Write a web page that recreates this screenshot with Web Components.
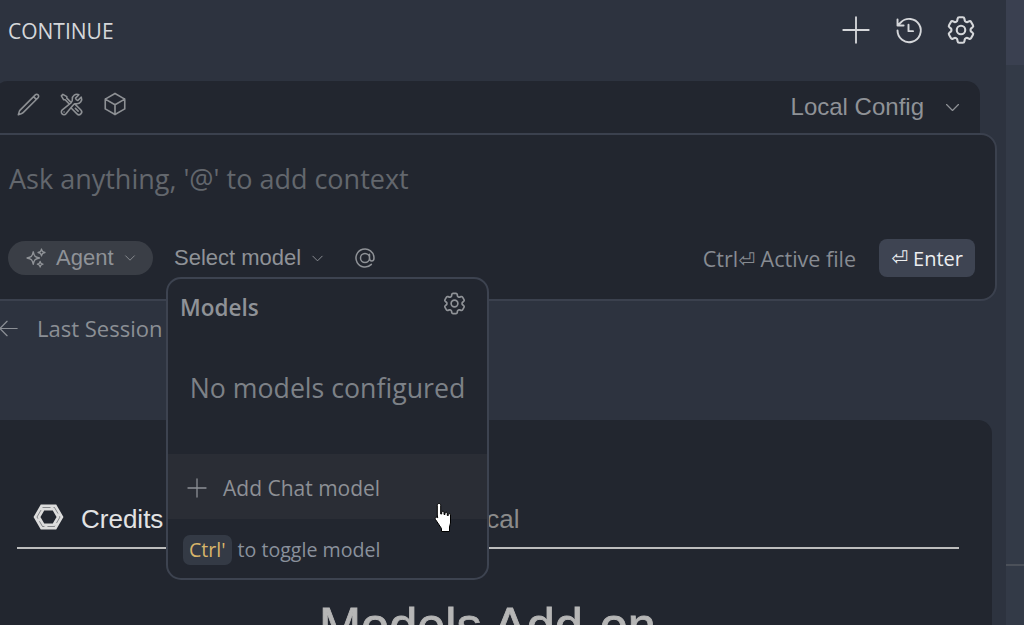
<!DOCTYPE html>
<html lang="en">
<head>
<meta charset="utf-8">
<title>Continue</title>
<style>
  html, body { margin: 0; height: 100%; overflow: hidden; background: #2d333f; }
  body { font-family: "Open Sans", "Liberation Sans", sans-serif; }
</style>
</head>
<body>
<continue-app></continue-app>

<script>
// icon paths, all drawn on a 24x24 box
const ICONS = {
  pencil: "m16.862 4.487 1.687-1.688a1.875 1.875 0 1 1 2.652 2.652L6.832 19.82a4.5 4.5 0 0 1-1.897 1.13l-2.685.8.8-2.685a4.5 4.5 0 0 1 1.13-1.897L16.863 4.487Zm0 0L19.5 7.125",
  tools: "M11.42 15.17 17.25 21A2.652 2.652 0 0 0 21 17.25l-5.877-5.877M11.42 15.17l2.496-3.03c.317-.384.74-.626 1.208-.766M11.42 15.17l-4.655 5.653a2.548 2.548 0 1 1-3.586-3.586l6.837-5.63m5.108-.233c.55-.164 1.163-.188 1.743-.14a4.5 4.5 0 0 0 4.486-6.336l-3.276 3.277a3.004 3.004 0 0 1-2.25-2.25l3.276-3.276a4.5 4.5 0 0 0-6.336 4.486c.091 1.076-.071 2.264-.904 2.95l-.102.085m-1.745 1.437L5.909 7.5H4.5L2.25 3.75l1.5-1.5L7.5 4.5v1.409l4.26 4.26m-1.745 1.437 1.745-1.437m6.615 8.206L15.75 15.75M4.867 19.125h.008v.008h-.008v-.008Z",
  cube: "m21 7.5-9-5.25L3 7.5m18 0-9 5.25m9-5.25v9l-9 5.25M3 7.5l9 5.25M3 7.5v9l9 5.25m0-9v9",
  sparkles: "M9.813 15.904 9 18.75l-.813-2.846a4.5 4.5 0 0 0-3.09-3.09L2.25 12l2.846-.813a4.5 4.5 0 0 0 3.09-3.09L9 5.25l.813 2.846a4.5 4.5 0 0 0 3.09 3.09L15.75 12l-2.846.813a4.5 4.5 0 0 0-3.09 3.09ZM18.259 8.715 18 9.750l-.259-1.035a3.375 3.375 0 0 0-2.455-2.456L14.25 6l1.036-.259a3.375 3.375 0 0 0 2.455-2.456L18 2.25l.259 1.035a3.375 3.375 0 0 0 2.456 2.456L21.75 6l-1.035.259a3.375 3.375 0 0 0-2.456 2.456ZM16.894 20.567 16.5 21.75l-.394-1.183a2.25 2.25 0 0 0-1.423-1.423L13.5 18.75l1.183-.394a2.25 2.25 0 0 0 1.423-1.423l.394-1.183.394 1.183a2.25 2.25 0 0 0 1.423 1.423l1.183.394-1.183.394a2.25 2.25 0 0 0-1.423 1.423Z",
  gear: "M9.594 3.94c.09-.542.56-.94 1.11-.94h2.593c.55 0 1.02.398 1.11.94l.213 1.281c.063.374.313.686.645.87.074.04.147.083.22.127.325.196.72.257 1.075.124l1.217-.456a1.125 1.125 0 0 1 1.37.49l1.296 2.247a1.125 1.125 0 0 1-.26 1.431l-1.003.827c-.293.241-.438.613-.43.992a7.723 7.723 0 0 1 0 .255c-.008.378.137.75.43.991l1.004.827c.424.35.534.955.26 1.43l-1.298 2.247a1.125 1.125 0 0 1-1.369.491l-1.217-.456c-.355-.133-.75-.072-1.076.124a6.47 6.47 0 0 1-.22.128c-.331.183-.581.495-.644.869l-.213 1.281c-.09.543-.56.94-1.11.94h-2.594c-.55 0-1.019-.398-1.11-.94l-.213-1.281c-.062-.374-.312-.686-.644-.87a6.52 6.52 0 0 1-.22-.127c-.325-.196-.72-.257-1.076-.124l-1.217.456a1.125 1.125 0 0 1-1.369-.49l-1.297-2.247a1.125 1.125 0 0 1 .26-1.431l1.004-.827c.292-.24.437-.613.43-.991a6.932 6.932 0 0 1 0-.255c.007-.38-.138-.751-.43-.992l-1.004-.827a1.125 1.125 0 0 1-.26-1.43l1.297-2.247a1.125 1.125 0 0 1 1.37-.491l1.216.456c.356.133.751.072 1.076-.124.072-.044.146-.086.22-.128.332-.183.582-.495.644-.869l.214-1.28ZM15 12a3 3 0 1 1-6 0 3 3 0 0 1 6 0Z",
  at: "M16.5 12a4.5 4.5 0 1 1-9 0 4.5 4.5 0 0 1 9 0Zm0 0c0 1.657 1.007 3 2.25 3S21 13.657 21 12a9 9 0 1 0-2.636 6.364M16.5 12V8.25",
  plus: "M12 3v18M3 12h18",
  history: "M3.500 12a9 9 0 1 0 2.500-6.200L3.500 8.200M3.500 3.500v4.700h4.700M12 7.500v5h3.500",
  chevron: "m19.5 8.25-7.5 7.5-7.5-7.5",
  back: "M10.5 19.5 3 12l7.5-7.5M3 12h18"
};

class UiIcon extends HTMLElement {
  connectedCallback() {
    if (this.shadowRoot) return;
    const size = this.getAttribute("size") || 24;
    const stroke = this.getAttribute("stroke") || 1.5;
    const shadow = this.attachShadow({ mode: "open" });
    shadow.innerHTML = `
      <style>
        :host { display: inline-flex; flex: none; width: ${size}px; height: ${size}px; color: inherit; }
        svg { width: 100%; height: 100%; display: block; }
      </style>
      <svg viewBox="0 0 24 24" fill="none" stroke="currentColor" stroke-width="${stroke}"
           stroke-linecap="round" stroke-linejoin="round"><path d="${ICONS[this.getAttribute("name")]}"/></svg>`;
  }
}
customElements.define("ui-icon", UiIcon);

// Title row with the three actions on the right
class TopBar extends HTMLElement {
  constructor() {
    super();
    this.attachShadow({ mode: "open" }).innerHTML = `
      <style>
        :host { display: flex; align-items: center; height: 62px; padding: 0 28px 0 8px; color: #d5d7da; }
        .title { flex: 1; font-size: 21px; }
        .actions { display: flex; align-items: center; gap: 20px; padding-bottom: 2px; }
      </style>
      <span class="title"><slot></slot></span>
      <div class="actions">
        <ui-icon name="plus" size="34" stroke="1.3"></ui-icon>
        <ui-icon name="history" size="31" stroke="1.5"></ui-icon>
        <ui-icon name="gear" size="34" stroke="1.5"></ui-icon>
      </div>`;
  }
}
customElements.define("top-bar", TopBar);

// The tool strip that sits on top of the input box
class ToolStrip extends HTMLElement {
  constructor() {
    super();
    this.attachShadow({ mode: "open" }).innerHTML = `
      <style>
        :host { display: flex; align-items: center; height: 52px; margin: 19px 26px 0 -6px; padding: 0 18px 0 22px;
                background: #22262f; border-radius: 14px 14px 0 0; color: #8d9094; box-sizing: border-box; }
        .tools { display: flex; align-items: center; gap: 18px; flex: 1; padding-bottom: 6px; }
        .config { display: flex; align-items: center; gap: 19px; font: 24px "Liberation Sans", sans-serif; color: #8f9297; }
      </style>
      <div class="tools">
        <ui-icon name="pencil" size="25"></ui-icon>
        <ui-icon name="tools" size="25"></ui-icon>
        <ui-icon name="cube" size="26"></ui-icon>
      </div>
      <div class="config"><slot></slot><ui-icon name="chevron" size="19"></ui-icon></div>`;
  }
}
customElements.define("tool-strip", ToolStrip);

// Input box: placeholder on top, mode and model pickers below
class ChatInput extends HTMLElement {
  constructor() {
    super();
    this.attachShadow({ mode: "open" }).innerHTML = `
      <style>
        :host { display: flex; flex-direction: column; height: 168px; margin: 0 9px 0 -16px; padding: 0 20px 0 22px;
                box-sizing: border-box; background: #22262f; border: 2px solid #3b414e; border-radius: 16px; }
        .placeholder { margin: 25px 0 0 1px; height: 38px; line-height: 38px; font-size: 27px; color: #63676d; white-space: nowrap; }
        .row { display: flex; align-items: center; margin-top: 41px; height: 38px; color: #8f9297; }
        .pill { display: flex; align-items: center; height: 34px; width: 145px; box-sizing: border-box; padding-left: 17px;
                background: #3a3e46; border-radius: 17px; font: 22px/36px "Liberation Sans", sans-serif; }
        .pill ui-icon:first-child { margin-right: 9px; }
        .pill ui-icon:last-child { margin-left: 9px; }
        .model { display: flex; align-items: center; margin-left: 21px; gap: 9px; font: 22px/36px "Liberation Sans", sans-serif; }
        .at { margin-left: 28px; }
        .hint { margin-left: auto; font-size: 21.5px; color: #878b92; white-space: nowrap; }
        .send { margin-left: 23px; height: 38px; padding: 0 12px; display: flex; align-items: center; box-sizing: border-box;
                background: #3e4452; border-radius: 8px; color: #eceef0; font-size: 20px; white-space: nowrap; }
        .ret { font-family: "DejaVu Sans", sans-serif; font-size: 20px; }
      </style>
      <div class="placeholder">Ask anything, '@' to add context</div>
      <div class="row">
        <div class="pill"><ui-icon name="sparkles" size="22"></ui-icon>Agent<ui-icon name="chevron" size="14"></ui-icon></div>
        <div class="model">Select model<ui-icon name="chevron" size="15"></ui-icon></div>
        <ui-icon class="at" name="at" size="24"></ui-icon>
        <span class="hint">Ctrl<span class="ret">⏎</span> Active file</span>
        <div class="send"><span class="ret">⏎</span>&nbsp;Enter</div>
      </div>`;
  }
}
customElements.define("chat-input", ChatInput);

class SessionLink extends HTMLElement {
  constructor() {
    super();
    this.attachShadow({ mode: "open" }).innerHTML = `
      <style>
        :host { display: flex; align-items: center; gap: 17px; height: 54px; margin-left: -3px; font-size: 22px; color: #8b8f95; }
      </style>
      <ui-icon name="back" size="23" stroke="1.3"></ui-icon><slot></slot>`;
  }
}
customElements.define("session-link", SessionLink);

// Dark card with the tabs and the add-on heading, cut off by the window
class AddonCard extends HTMLElement {
  constructor() {
    super();
    this.attachShadow({ mode: "open" }).innerHTML = `
      <style>
        :host { display: block; margin: 65px 14px 0 -14px; height: 300px; padding-top: 72px; box-sizing: border-box;
                background: #22262f; border-radius: 14px; font-family: "Liberation Sans", sans-serif; }
        .tabs { display: flex; align-items: center; gap: 294px; height: 55px; margin: 0 33px 0 31px; padding-left: 16px;
                border-bottom: 2px solid #bdbdbd; }
        .tab { display: flex; align-items: center; gap: 17px; font-size: 26px; color: #e2e3e4; }
        .tab.off { color: #8b8b8b; }
        h1 { margin: 47px 0 0; font-size: 50.5px; line-height: 60px; font-weight: 400; text-align: center; color: #b6b6b6;
             -webkit-text-stroke: 0.8px #b6b6b6; width: 1003px; white-space: nowrap; }
        svg { display: block; flex: none; margin-top: -6px; }
      </style>
      <div class="tabs">
        <div class="tab">
          <svg width="31" height="30" viewBox="0 0 31 30" fill="none" stroke-linejoin="miter">
            <path d="M4 15 9.500 5.500H21.500L27 15 21.500 24.500H9.500Z" stroke="#dcdcdc" stroke-width="6"/>
            <path d="M4 15 9.500 5.500H21.500L27 15 21.500 24.500H9.500Z" stroke="#22262f" stroke-opacity="0.6" stroke-width="0.8" stroke-dasharray="8 3"/>
          </svg>
          <span>Credits</span>
        </div>
        <div class="tab off"><span>Local</span></div>
      </div>
      <h1><slot></slot></h1>`;
  }
}
customElements.define("addon-card", AddonCard);

// Model picker dropdown, lies over the input and the card
class ModelMenu extends HTMLElement {
  constructor() {
    super();
    this.attachShadow({ mode: "open" }).innerHTML = `
      <style>
        :host { position: absolute; left: 166px; top: 277px; width: 323px; height: 303px; box-sizing: border-box;
                display: flex; flex-direction: column; background: #22262f; border: 2px solid #3d4350; border-radius: 15px; overflow: hidden; }
        header { display: flex; align-items: flex-start; justify-content: space-between; height: 60px; padding: 0 19px 0 12px; color: #8f9297; }
        .name { font-size: 22.5px; font-weight: 600; line-height: 58px; }
        header ui-icon { margin-top: 11px; }
        .empty { flex: 1; display: flex; align-items: center; justify-content: center; padding-bottom: 18px;
                 font-size: 26.7px; color: #7d8187; }
        .add { display: flex; align-items: center; gap: 14px; height: 65px; padding: 2px 0 0 17px; box-sizing: border-box; background: #2a2d35;
               font-size: 21px; color: #8d9096; }
        footer { display: flex; align-items: center; gap: 6px; height: 59px; padding: 2px 0 0 15px; box-sizing: border-box; font-size: 19.6px; color: #8a919c; }
        kbd { font: inherit; height: 30px; line-height: 30px; padding: 0 6px; background: #343a45; border-radius: 7px; color: #d8b56a; }
      </style>
      <header><span class="name">Models</span><ui-icon name="gear" size="27"></ui-icon></header>
      <div class="empty">No models configured</div>
      <div class="add"><ui-icon name="plus" size="24" stroke="1.3"></ui-icon>Add Chat model</div>
      <footer><kbd>Ctrl'</kbd><span>to toggle model</span></footer>`;
  }
}
customElements.define("model-menu", ModelMenu);

// The mouse pointer from the capture
class HandCursor extends HTMLElement {
  constructor() {
    super();
    this.attachShadow({ mode: "open" }).innerHTML = `
      <style>
        :host { position: absolute; left: 434px; top: 502px; width: 22px; height: 31px; }
        svg { display: block; }
      </style>
      <svg width="22" height="31" viewBox="0 0 22 31">
        <path d="M5 1.500c1.200 0 1.700.8 1.700 1.900V12h1V10c0-1 2.300-1 2.300 0v2.500h1V11c0-1 2.300-1 2.300 0v2.500h1V12.500c0-1 2.200-1 2.200 0V21l-1 4v4.500H7.500v-3L1.500 17.500c-1-1.700.8-3.200 2.200-1.700L3.300 13V3.400c0-1.100.5-1.900 1.700-1.900z"
              fill="#fff" stroke="#000" stroke-width="1"/>
      </svg>`;
  }
}
customElements.define("hand-cursor", HandCursor);

// Page frame: sidebar content on the left, a scrollbar track on the right
class ContinueApp extends HTMLElement {
  constructor() {
    super();
    this.attachShadow({ mode: "open" }).innerHTML = `
      <style>
        :host { display: grid; grid-template-columns: 1006px 18px; height: 625px; position: relative; overflow: hidden; }
        main { display: flex; flex-direction: column; min-width: 0; }
        .track { background: #333a47; display: flex; flex-direction: column; }
        .thumb { height: 65px; background: #3a4050; }
        .mark { height: 2px; margin-top: 499px; background: #4b5059; }
      </style>
      <main>
        <top-bar>CONTINUE</top-bar>
        <tool-strip>Local Config</tool-strip>
        <chat-input></chat-input>
        <session-link>Last Session</session-link>
        <addon-card>Models Add-on</addon-card>
      </main>
      <div class="track"><div class="thumb"></div><div class="mark"></div></div>
      <model-menu></model-menu>
      <hand-cursor></hand-cursor>`;
  }
}
customElements.define("continue-app", ContinueApp);
</script>
</body>
</html>
